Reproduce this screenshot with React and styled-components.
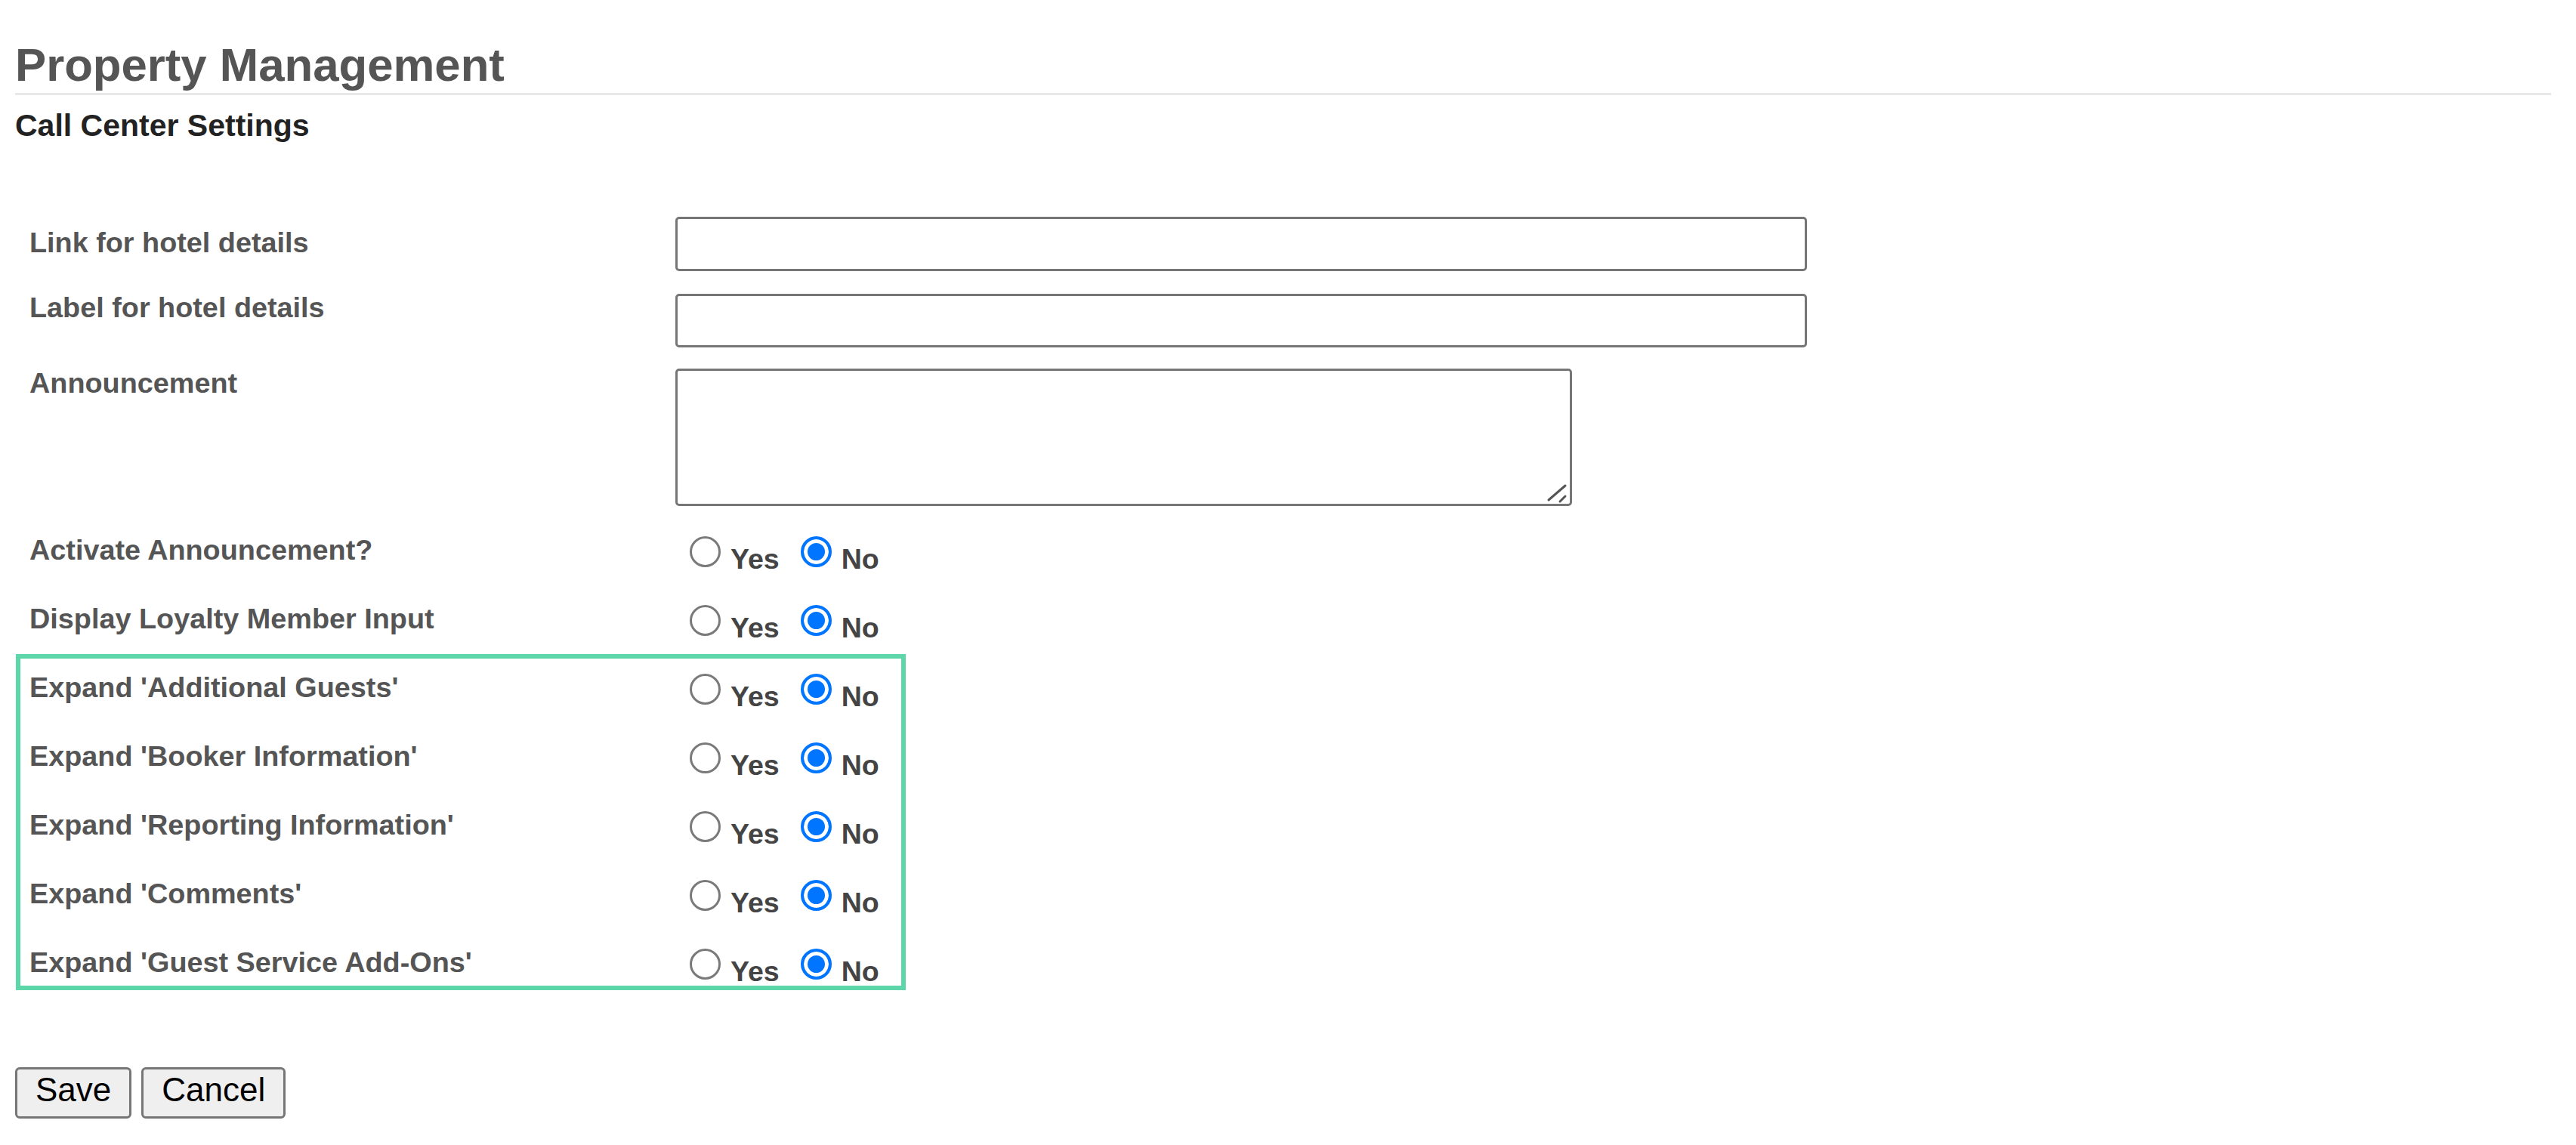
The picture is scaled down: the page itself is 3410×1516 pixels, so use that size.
import React from 'react';
import styled, { createGlobalStyle } from 'styled-components';

const GlobalStyle = createGlobalStyle`
  html, body {
    margin: 0;
    padding: 0;
    background: #fff;
  }
  body {
    font-family: "Liberation Sans", Arial, sans-serif;
  }
`;

const textRows = [
  { label: 'Link for hotel details', kind: 'input', height: 72, labelTop: 12, gap: 30 },
  { label: 'Label for hotel details', kind: 'input', height: 71, labelTop: -4, gap: 28 },
  { label: 'Announcement', kind: 'textarea', height: 182, labelTop: -3, gap: 30 },
];

const plainToggles = [
  { id: 'activateAnnouncement', label: 'Activate Announcement?' },
  { id: 'loyaltyInput', label: 'Display Loyalty Member Input' },
];

const expandToggles = [
  { id: 'expandGuests', label: "Expand 'Additional Guests'" },
  { id: 'expandBooker', label: "Expand 'Booker Information'" },
  { id: 'expandReporting', label: "Expand 'Reporting Information'" },
  { id: 'expandComments', label: "Expand 'Comments'" },
  { id: 'expandAddOns', label: "Expand 'Guest Service Add-Ons'" },
];

const App = () => {
  const [values, setValues] = React.useState({});

  const setToggle = (id, value) => setValues((prev) => ({ ...prev, [id]: value }));

  const renderToggle = (row) => {
    const current = values[row.id] || 'no';
    return (
      <RadioRow key={row.id}>
        <Label $top={6}>{row.label}</Label>
        <RadioGroup>
          <Option>
            <Radio
              type='radio'
              name={row.id}
              checked={current === 'yes'}
              onChange={() => setToggle(row.id, 'yes')}
            />
            <OptionText>Yes</OptionText>
          </Option>
          <Option>
            <Radio
              type='radio'
              name={row.id}
              checked={current === 'no'}
              onChange={() => setToggle(row.id, 'no')}
            />
            <OptionText>No</OptionText>
          </Option>
        </RadioGroup>
      </RadioRow>
    );
  };

  return (
    <Page>
      <GlobalStyle />
      <Title>Property Management</Title>
      <SubTitle>Call Center Settings</SubTitle>

      <Form>
        {textRows.map((row) => (
          <FieldRow key={row.label} $gap={row.gap}>
            <Label $top={row.labelTop}>{row.label}</Label>
            {row.kind === 'input' ? (
              <TextInput type='text' $height={row.height} />
            ) : (
              <AreaWrap>
                <TextArea $height={row.height} />
                <ResizeHandle width='40' height='40' viewBox='0 0 40 40'>
                  <line x1='9' y1='32' x2='31' y2='13' stroke='#555' strokeWidth='3' strokeLinecap='round' />
                  <line x1='24' y1='34' x2='31' y2='27' stroke='#555' strokeWidth='3' strokeLinecap='round' />
                </ResizeHandle>
              </AreaWrap>
            )}
          </FieldRow>
        ))}

        {plainToggles.map(renderToggle)}

        <Highlighted>{expandToggles.map(renderToggle)}</Highlighted>
      </Form>

      <ButtonBar>
        <Button type='button'>Save</Button>
        <Button type='button'>Cancel</Button>
      </ButtonBar>
    </Page>
  );
};

const Page = styled.div`
  padding: 50px 33px 40px 20px;
`;

const Title = styled.h1`
  margin: 0;
  padding-bottom: 1px;
  border-bottom: 3px solid #e8e8e8;
  font-size: 61.7px;
  line-height: 72px;
  font-weight: bold;
  color: #555;
`;

const SubTitle = styled.h2`
  margin: 17px 0 0;
  font-size: 41px;
  line-height: 46px;
  font-weight: bold;
  color: #222;
`;

const Form = styled.div`
  margin-top: 98px;
  padding-left: 19px;
`;

const FieldRow = styled.div`
  display: flex;
  align-items: flex-start;
  margin-bottom: ${(p) => p.$gap}px;
`;

const Label = styled.div`
  width: 855px;
  flex-shrink: 0;
  margin-top: ${(p) => p.$top}px;
  font-size: 37.8px;
  line-height: 44px;
  font-weight: bold;
  color: #555;
`;

const TextInput = styled.input`
  box-sizing: border-box;
  width: 1498px;
  height: ${(p) => p.$height}px;
  margin: 0;
  border: 3px solid #767676;
  border-radius: 5px;
  background: #fff;
  font-size: 37px;
  padding: 0 8px;
`;

const AreaWrap = styled.div`
  position: relative;
  display: flex;
`;

const TextArea = styled.textarea`
  box-sizing: border-box;
  width: 1187px;
  height: ${(p) => p.$height}px;
  margin: 0;
  border: 3px solid #767676;
  border-radius: 5px;
  background: #fff;
  resize: none;
  font-size: 37px;
`;

const ResizeHandle = styled.svg`
  position: absolute;
  right: 0;
  bottom: 0;
  pointer-events: none;
`;

const RadioRow = styled.div`
  display: flex;
  align-items: flex-start;
  height: 91px;
`;

const RadioGroup = styled.div`
  display: flex;
  align-items: flex-start;
  gap: 28px;
  padding: 10px 0 0 19px;
`;

const Option = styled.label`
  display: flex;
  align-items: flex-start;
  gap: 13px;
  cursor: pointer;
`;

const Radio = styled.input`
  appearance: none;
  box-sizing: border-box;
  width: 41px;
  height: 41px;
  margin: 0;
  border: 3px solid #7a7a7a;
  border-radius: 50%;
  background: #fff;
  cursor: pointer;

  &:checked {
    border: 4px solid #0075ff;
    background: #0075ff;
    box-shadow: inset 0 0 0 5px #fff;
  }
`;

const OptionText = styled.span`
  padding-top: 8px;
  font-size: 37.5px;
  line-height: 44px;
  font-weight: bold;
  color: #444;
`;

const Highlighted = styled.div`
  position: relative;

  &::after {
    content: '';
    position: absolute;
    top: -16px;
    left: -18px;
    width: 1178px;
    height: 445px;
    box-sizing: border-box;
    border: 6px solid #5dd6a9;
    pointer-events: none;
  }
`;

const ButtonBar = styled.div`
  display: flex;
  gap: 13px;
  margin-top: 76px;
`;

const Button = styled.button`
  box-sizing: border-box;
  height: 68px;
  padding: 2px 24px 10px;
  border: 3px solid #767676;
  border-radius: 6px;
  background: #efefef;
  font-family: "Liberation Sans", Arial, sans-serif;
  font-size: 44px;
  line-height: 50px;
  color: #000;
  cursor: pointer;
`;

export default App;
